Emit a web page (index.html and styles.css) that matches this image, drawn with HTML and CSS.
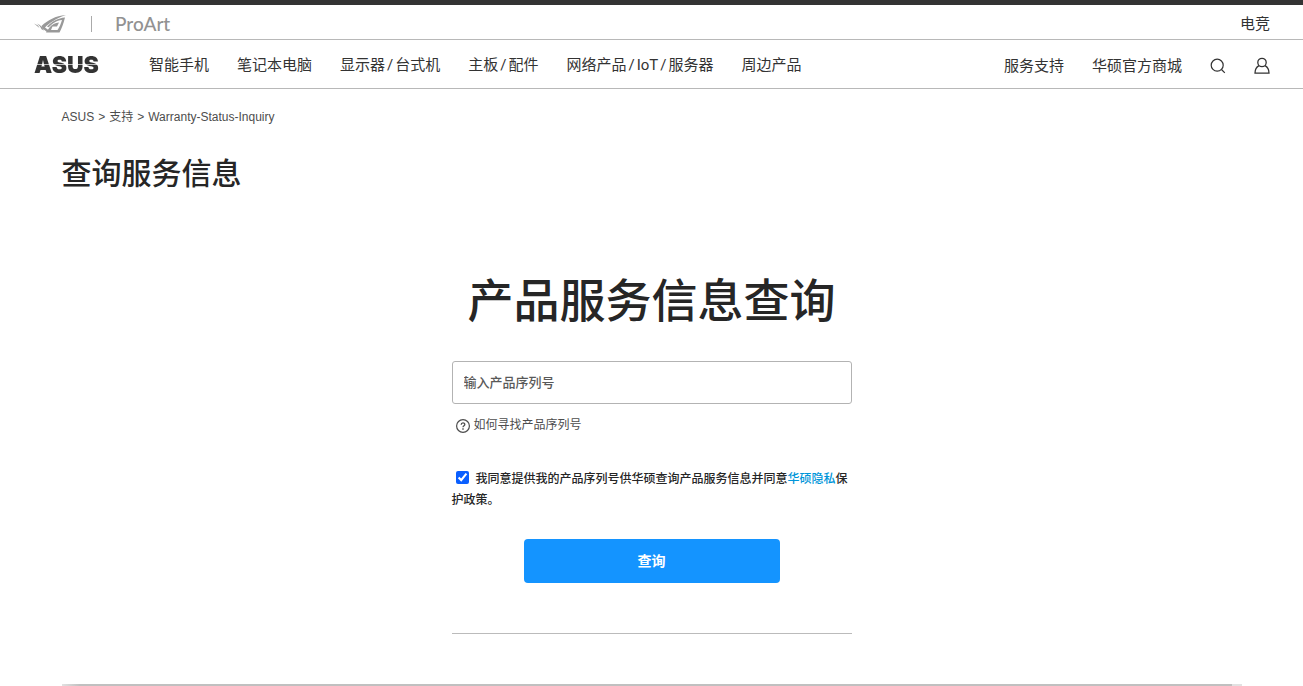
FILE: index.html
```html
<!DOCTYPE html>
<html lang="zh-CN">
<head>
<meta charset="utf-8">
<meta name="viewport" content="width=device-width, initial-scale=1">
<title>查询服务信息</title>
<link rel="stylesheet" href="styles.css">
</head>
<body>
<header>
  <div class="topbar">
    <a class="rog" href="#" aria-label="ROG">
      <svg width="32" height="18" viewBox="0 0 32 18" fill="#999">
        <path d="M0 8.500 L4 10.500 L5.500 13 Z"/>
        <path d="M3 8.500 C6.500 10 8.500 12 10 15.500 L7.500 14.200 C6.500 12 5 10 3 8.500 Z"/>
        <path d="M7.500 11 C14 5 21 1 32 0 C22 3.500 15 8 11 12.500 L15 15.500 L13 17 L8.500 13.500 Z"/>
        <path d="M13 11.500 C18 6.500 24 3 31 2.500 C29.500 9 27.500 13.500 25.500 17.500 L12 17.500 L15.500 12.500 C18 9.500 21 8 25 7.500 L23 11.500 L18.500 11.500 L17 15 L23.500 15 C25.500 12 27 8.500 28 5 C22.500 5.500 18 8.500 14.700 12.300 Z" fill-rule="evenodd"/>
      </svg>
    </a>
    <a class="proart" href="#">ProArt</a>
    <a class="gaming" href="#">电竞</a>
  </div>
  <div class="mainbar">
    <a class="asus" href="#"><span>ASUS</span></a>
    <nav class="menu">
      <a href="#">智能手机</a>
      <a href="#">笔记本电脑</a>
      <a href="#"><span>显示器</span><span>/</span><span>台式机</span></a>
      <a href="#"><span>主板</span><span>/</span><span>配件</span></a>
      <a href="#"><span>网络产品</span><span>/</span><span>IoT</span><span>/</span><span>服务器</span></a>
      <a href="#">周边产品</a>
    </nav>
    <div class="tools">
      <a href="#">服务支持</a>
      <a href="#">华硕官方商城</a>
      <button type="button" aria-label="搜索">
        <svg width="16" height="16" viewBox="0 0 16 16" fill="none" stroke="#333" stroke-width="1.200"><circle cx="7.200" cy="7.200" r="6"/><path d="M11.500 11.500 L14.800 14.800"/></svg>
      </button>
      <button type="button" aria-label="账户">
        <svg width="16" height="18" viewBox="0 0 16 18" fill="none" stroke="#333" stroke-width="1.300"><circle cx="8" cy="5.500" r="4.200"/><path d="M5 8.700 C2.500 10 1 12.800 1 16.200 L15 16.200 C15 12.800 13.500 10 11 8.700"/></svg>
      </button>
    </div>
  </div>
</header>
<main class="page">
  <div class="crumbs"><a href="#">ASUS</a><span>&gt;</span><a href="#">支持</a><span>&gt;</span><span>Warranty-Status-Inquiry</span></div>
  <h1>查询服务信息</h1>
  <form class="inquiry">
    <h2>产品服务信息查询</h2>
    <input class="serial" type="text" placeholder="输入产品序列号" aria-label="输入产品序列号">
    <a class="help" href="#">
      <svg width="14" height="14" viewBox="0 0 14 14" fill="none" stroke="#4d4d4d"><circle cx="7" cy="7" r="6.400" stroke-width="1.200"/><path d="M5.200 5.700 C5.200 3.200 8.800 3.300 8.800 5.500 C8.800 6.800 7 6.700 7 8.300" stroke-width="1.300"/><path d="M7 9.300 V10.700" stroke-width="1.400"/></svg>
      <span>如何寻找产品序列号</span>
    </a>
    <p class="consent"><input id="agree" type="checkbox" checked><label for="agree">我同意提供我的产品序列号供华硕查询产品服务信息并同意<a href="#">华硕隐私</a>保护政策。</label></p>
    <button class="submit" type="button">查询</button>
  </form>
  <div class="track"></div>
</main>
</body>
</html>
```
FILE: styles.css
```css
* { box-sizing: border-box; }
body {
  margin: 0;
  background: #fff;
  color: #333;
  font-family: "Liberation Sans", "Noto Sans CJK SC", sans-serif;
  font-size: 15px;
  overflow-x: hidden;
}
a { color: inherit; text-decoration: none; }
button { border: 0; padding: 0; background: none; cursor: pointer; }
svg { display: block; }
.topbar, .mainbar {
  display: flex;
  align-items: center;
  padding: 0 33px 0 34px;
  border-bottom: 1px solid #b8b8b8;
  font-family: Roboto, "Noto Sans CJK SC", sans-serif;
  line-height: 24px;
}
.topbar { height: 40px; border-top: 5px solid #333; padding-top: 3px; }
.proart {
  margin-left: 25px;
  padding-left: 23px;
  border-left: 1px solid #aaa;
  color: #929292;
  font: 500 19px/16px Lato, sans-serif;
}
.gaming { margin-left: auto; }
.mainbar { height: 49px; padding-top: 2px; }
.asus {
  width: 115px;
  font: 900 23px/24px Inter, "DejaVu Sans", sans-serif;
}
.asus span {
  display: inline-block;
  background: linear-gradient(#333 0 11px, #bbb 11px 12px, #333 12px);
  background-clip: text;
  color: transparent;
}
.menu { display: flex; gap: 28px; }
.menu a { display: flex; gap: 2px; }
.tools { display: flex; align-items: center; gap: 28px; margin-left: auto; padding-top: 1px; }
.page { max-width: 1180px; margin: 0 auto; }
.crumbs { display: flex; gap: 4px; padding-top: 18px; color: #4d4d4d; font-size: 12px; line-height: 20px; }
h1, h2 { margin: 0; color: #262626; font-family: "Noto Sans CJK SC", sans-serif; font-weight: 500; }
h1 { margin-top: 22px; font-size: 30px; line-height: 44px; }
.inquiry {
  max-width: 400px;
  margin: 70px auto 50px;
  padding-bottom: 50px;
  border-bottom: 1px solid #bbb;
}
h2 { margin: 0 -20px 29px; font-size: 46px; line-height: 69px; text-align: center; white-space: nowrap; }
.serial {
  display: block;
  width: 100%;
  height: 43px;
  padding: 0 11px 2px;
  border: 1px solid #b3b3b3;
  border-radius: 3px;
  font: 500 13px "Noto Sans CJK SC", sans-serif;
}
.serial::placeholder { color: #595959; opacity: 1; }
.help {
  display: flex;
  align-items: center;
  gap: 4px;
  margin-top: 11px;
  padding-left: 4px;
  color: #4d4d4d;
  font-size: 12px;
  line-height: 20px;
}
.help svg { margin-top: 2px; }
.consent {
  margin: 32px 0 30px;
  color: #262626;
  font-family: "Noto Sans CJK SC", sans-serif;
  font-size: 12px;
  font-weight: 500;
  line-height: 21px;
}
.consent input { width: 13px; height: 13px; margin: 0 7px 0 4px; vertical-align: -1px; accent-color: #0a5fff; }
.consent a { color: #0095d9; }
.submit {
  display: block;
  width: 64%;
  height: 44px;
  margin: 0 auto;
  padding-bottom: 2px;
  border-radius: 4px;
  background: #1494ff;
  color: #fff;
  font: bold 14px "Noto Sans CJK SC", sans-serif;
}
.track {
  height: 2px;
  background: linear-gradient(90deg, #e2e2e2, #c0c0c0 18px calc(100% - 10px), #e2e2e2 calc(100% - 10px));
}
```
